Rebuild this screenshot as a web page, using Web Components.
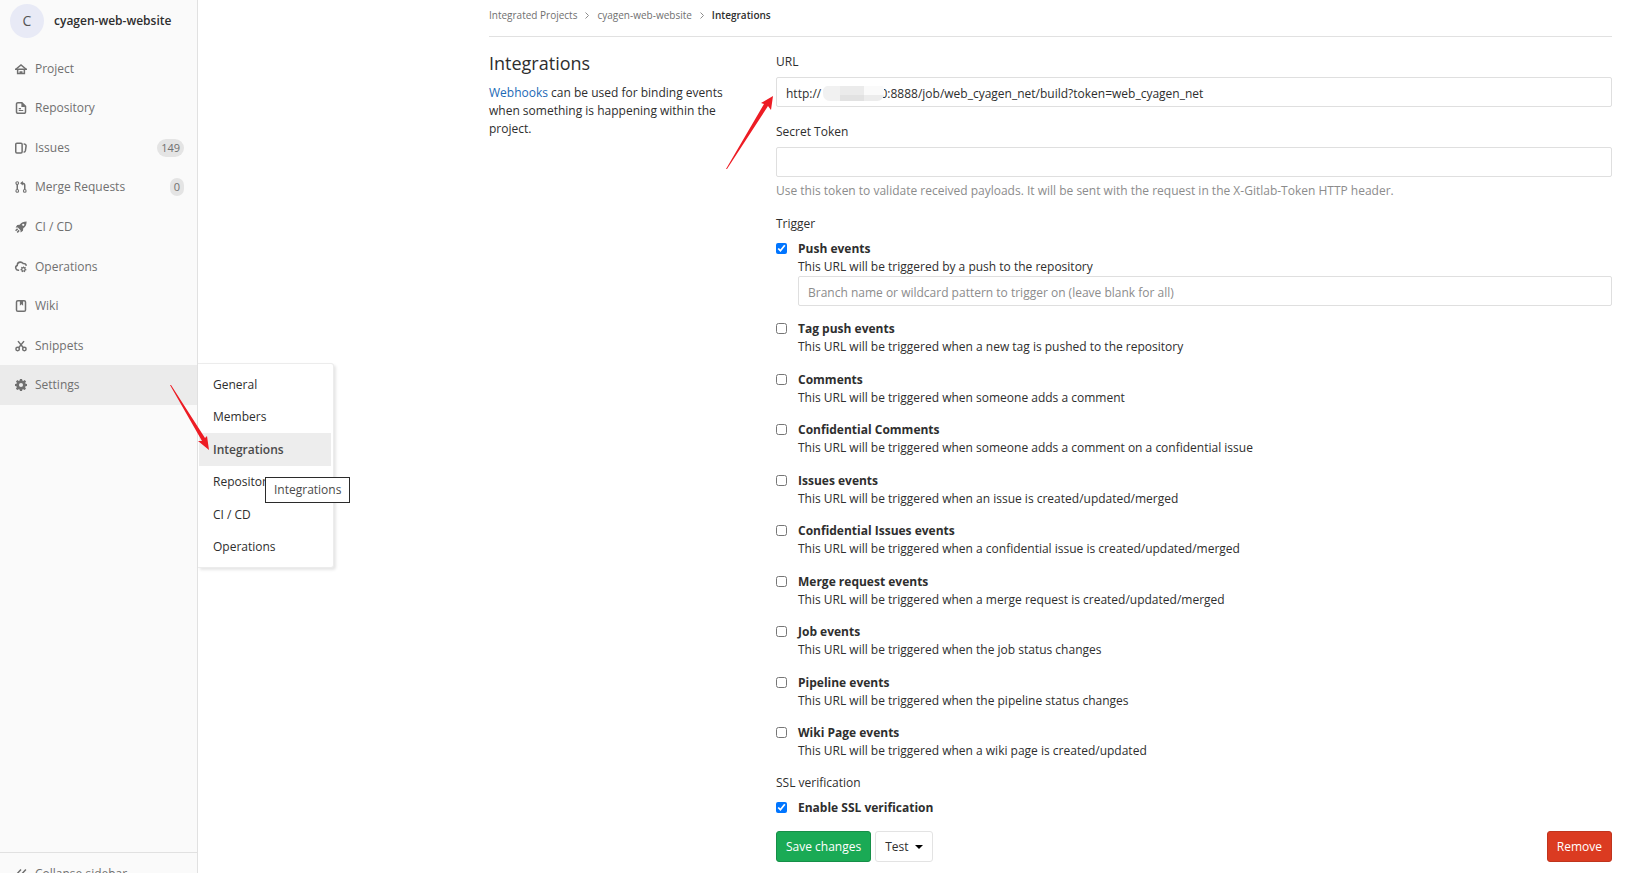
<!DOCTYPE html>
<html lang="en">
<head>
<meta charset="utf-8">
<title>Integrations · cyagen-web-website</title>
<style>
  body {
    margin: 0;
    overflow: hidden;
    font: 12px/18px "Open Sans", "Noto Sans", sans-serif;
    color: #2e2e2e;
    background: #fff;
  }
</style>
</head>
<body>
<app-shell>
  <project-sidebar slot="sidebar" name="cyagen-web-website" initial="C">
    <nav-item icon="home">Project</nav-item>
    <nav-item icon="doc">Repository</nav-item>
    <nav-item icon="issues" count="149">Issues</nav-item>
    <nav-item icon="merge" count="0">Merge Requests</nav-item>
    <nav-item icon="rocket">CI / CD</nav-item>
    <nav-item icon="cloud">Operations</nav-item>
    <nav-item icon="book">Wiki</nav-item>
    <nav-item icon="scissors">Snippets</nav-item>
    <nav-item icon="gear" active>Settings
      <nav-flyout slot="flyout" items="General,Members,Integrations,Repository,CI / CD,Operations" current="Integrations"></nav-flyout>
    </nav-item>
  </project-sidebar>

  <bread-crumbs path="Integrated Projects,cyagen-web-website,Integrations"></bread-crumbs>

  <settings-section heading="Integrations">
    <webhook-intro slot="intro"></webhook-intro>
    <form-field label="URL" value="http://                   0:8888/job/web_cyagen_net/build?token=web_cyagen_net" masked></form-field>
    <form-field label="Secret Token" hint="Use this token to validate received payloads. It will be sent with the request in the X-Gitlab-Token HTTP header."></form-field>
    <option-group label="Trigger" grow>
      <check-option label="Push events" hint="This URL will be triggered by a push to the repository" placeholder="Branch name or wildcard pattern to trigger on (leave blank for all)" checked></check-option>
      <check-option label="Tag push events" hint="This URL will be triggered when a new tag is pushed to the repository"></check-option>
      <check-option label="Comments" hint="This URL will be triggered when someone adds a comment"></check-option>
      <check-option label="Confidential Comments" hint="This URL will be triggered when someone adds a comment on a confidential issue"></check-option>
      <check-option label="Issues events" hint="This URL will be triggered when an issue is created/updated/merged"></check-option>
      <check-option label="Confidential Issues events" hint="This URL will be triggered when a confidential issue is created/updated/merged"></check-option>
      <check-option label="Merge request events" hint="This URL will be triggered when a merge request is created/updated/merged"></check-option>
      <check-option label="Job events" hint="This URL will be triggered when the job status changes"></check-option>
      <check-option label="Pipeline events" hint="This URL will be triggered when the pipeline status changes"></check-option>
      <check-option label="Wiki Page events" hint="This URL will be triggered when a wiki page is created/updated"></check-option>
    </option-group>
    <option-group label="SSL verification">
      <check-option label="Enable SSL verification" checked></check-option>
    </option-group>
    <form-actions></form-actions>
  </settings-section>
</app-shell>
<arrow-notes></arrow-notes>

<script>
/** Sidebar icons, all on a 16 x 16 grid. */
const ICONS = {
  home: '<path d="M1.500 8 8 2.500 14.500 8" class="s"/><path d="M0 8.300h16M3.500 8.300v5.700h9v-5.700" class="s"/><path d="M6 11h4v2.500H6z"/>',
  doc: '<path d="M3.800 1h5.400L14 5.600v7.600a1.800 1.800 0 0 1-1.800 1.800H3.800A1.800 1.800 0 0 1 2 13.200V2.800A1.800 1.800 0 0 1 3.800 1z" class="s"/><path d="M8.500 1v5.500H14L9.500 1z"/><path d="M5 8h3v1.500H5zM5 10.500h6V12H5z"/>',
  issues: '<rect x="1" y="1.500" width="8.500" height="13" rx="1.500" class="s"/><path d="M11.500 2.500c2.500.3 3.500.9 3.300 2.600l-.9 6.400c-.2 1.200-.9 1.900-2.400 2.200" class="s"/>',
  merge: '<circle cx="3" cy="2.800" r="1.800" class="t"/><circle cx="3" cy="13.200" r="1.800" class="t"/><circle cx="13" cy="13.200" r="1.800" class="t"/><path d="M3 4.600v6.800M13 11.400V6c0-2-.8-3-3-3H8.500" class="s"/><path d="M10.500 0v6L6.800 3z"/>',
  rocket: '<path d="M15.500.5c-4 0-7 1.200-9.300 4.500L3 5.400.8 8.500l3 .2 3.500 3.500.2 3 3.100-2.200.4-3.200C14.300 7.500 15.500 4.500 15.500.5zM11 3.600a1.500 1.500 0 1 1 0 3 1.500 1.500 0 0 1 0-3z" fill-rule="evenodd"/><path d="M3.500 10.500.8 13M5.500 12.500 3 15.200" class="s"/>',
  cloud: '<path d="M5.500 12.200H4.200A3.200 3.200 0 0 1 3 6C3 3.300 4.800 1.500 7.300 1.500c1.500 0 2.500.5 3.400 1.700 2.300-.2 4.100 1 4.300 3.300" class="s"/><path d="m11.500 6.800.6 1.400 1.500-.5.900 1.100-.8 1.300 1.500.9-.2 1.500-1.500.2.100 1.600-1.300.6-1.100-1.100-1.200 1.100-1.300-.7.200-1.500-1.500-.3-.1-1.500 1.400-.8-.7-1.400 1-1 1.500.5zm-.3 3a1.400 1.400 0 1 0 0 2.800 1.400 1.400 0 0 0 0-2.800z" fill-rule="evenodd"/>',
  book: '<rect x="2" y="1" width="12" height="14" rx="1.800" class="s"/><path d="M6.500 1h4.300v6.500L8.600 5.800 6.500 7.500z"/>',
  scissors: '<circle cx="3.500" cy="12" r="2.300" class="s"/><circle cx="12.500" cy="12" r="2.300" class="s"/><path d="M4 1.500 10.900 10M12 1.500 5.100 10" class="s"/>',
  gear: '<path d="M6.600 0h2.800l.4 2.100 1.300.5L12.900 1.400l1.900 1.900-1.200 1.800.5 1.300 1.900.3v2.700l-2 .4-.5 1.300 1.100 1.800-1.900 1.900-1.800-1.200-1.200.5L9.400 16H6.600l-.4-1.900-1.300-.5-1.800 1.200-1.900-1.900 1.200-1.800-.5-1.300L0 9.400V6.700l2-.4.5-1.300-1.200-1.800 1.900-1.900L5 2.600l1.200-.5zM8 5.300a2.700 2.700 0 1 0 0 5.400 2.700 2.700 0 0 0 0-5.400z" fill-rule="evenodd"/>',
  collapse: '<path d="M8 2 2.500 8 8 14M14.500 2 9 8l5.500 6" class="s"/>'
};

const iconSvg = (name) => `<svg viewBox="0 0 16 16" aria-hidden="true">${ICONS[name]}</svg>`;

const iconStyles = `
  svg { width: 12px; height: 12px; flex: none; fill: currentColor; overflow: visible; }
  svg .s { fill: none; stroke: currentColor; stroke-width: 2; }
  svg .t { fill: none; stroke: currentColor; stroke-width: 1.4; }
`;

const inputStyles = `
  input[type=text] {
    display: block;
    box-sizing: border-box;
    width: 100%;
    height: 30px;
    padding: 2px 9px 0;
    border: 1px solid #dfdfdf;
    border-radius: 2px;
    background: #fff;
    color: inherit;
    font: inherit;
  }
  input::placeholder { color: #8c8c8c; opacity: 1; }
`;

/** Base class: renders the subclass markup into an open shadow root. */
class BaseElement extends HTMLElement {
  connectedCallback () {
    if (this.shadowRoot) return;
    this.attachShadow({ mode: 'open' });
    this.shadowRoot.innerHTML = `<style>${this.styles()}</style>${this.markup()}`;
  }

  attr (name) {
    return this.getAttribute(name) || '';
  }
}

/** Sidebar on the left, breadcrumbs and content on the right. */
class AppShell extends BaseElement {
  styles () {
    return `
      :host { display: flex; min-height: 100vh; }
      main {
        flex: 1;
        display: flex;
        flex-direction: column;
        padding: 0 23px 11px 291px;
      }
    `;
  }

  markup () {
    return '<slot name="sidebar"></slot><main><slot></slot></main>';
  }
}

class ProjectSidebar extends BaseElement {
  styles () {
    return `
      ${iconStyles}
      :host {
        display: flex;
        flex-direction: column;
        box-sizing: border-box;
        flex: none;
        width: 198px;
        height: 100vh;
        background: #fafafa;
        border-right: 1px solid #e1e1e1;
      }
      header a {
        display: flex;
        align-items: center;
        gap: 10px;
        padding: 4px 10px;
        color: #2e2e2e;
        font-weight: 600;
        text-decoration: none;
      }
      .avatar {
        width: 34px;
        border-radius: 50%;
        background: #e8eaf6;
        color: #555;
        font-size: 14px;
        font-weight: 400;
        line-height: 34px;
        text-align: center;
      }
      nav {
        display: grid;
        grid-auto-rows: 1fr;
        height: 356px;
        margin-top: 7px;
      }
      button {
        display: flex;
        align-items: center;
        gap: 8px;
        height: 43px;
        margin: auto 0 -22px;
        padding: 0 15px;
        border: 0;
        border-top: 1px solid #e1e1e1;
        background: none;
        color: #707070;
        font: inherit;
      }
    `;
  }

  markup () {
    return `
      <header><a href="#"><span class="avatar">${this.attr('initial')}</span>${this.attr('name')}</a></header>
      <nav><slot></slot></nav>
      <button type="button">${iconSvg('collapse')}Collapse sidebar</button>
    `;
  }
}

class NavItem extends BaseElement {
  styles () {
    return `
      ${iconStyles}
      :host { display: grid; position: relative; color: #707070; }
      :host([active]) { background: #ebebeb; }
      a {
        display: flex;
        align-items: center;
        gap: 8px;
        padding: 0 13px 0 15px;
        color: inherit;
        text-decoration: none;
      }
      .label { flex: 1; }
      .badge {
        padding: 0 4px;
        border-radius: 9px;
        background: #e4e4e4;
        font-size: 11px;
      }
    `;
  }

  markup () {
    const badge = this.hasAttribute('count') ? `<span class="badge">${this.attr('count')}</span>` : '';
    return `
      <a href="#">${iconSvg(this.attr('icon'))}<span class="label"><slot></slot></span>${badge}</a>
      <slot name="flyout"></slot>
    `;
  }
}

/** Submenu that opens beside its nav item, with the tooltip of the hovered entry. */
class NavFlyout extends BaseElement {
  styles () {
    return `
      :host {
        position: absolute;
        left: 198px;
        top: -2px;
        box-sizing: border-box;
        width: 136px;
        padding: 4px 2px 4px 1px;
        border: 1px solid #ececec;
        border-left: 0;
        border-radius: 0 3px 3px 0;
        background: #fff;
        box-shadow: 2px 2px 3px #0000001a;
        color: #2e2e2e;
      }
      ul {
        display: grid;
        grid-auto-rows: 1fr;
        height: 195px;
        margin: 0;
        padding: 0;
        list-style: none;
      }
      li { display: grid; }
      a {
        display: flex;
        align-items: center;
        padding: 0 14px;
        color: inherit;
        text-decoration: none;
      }
      a[aria-current] { background: #ededed; color: #4a4a4a; font-weight: 600; }
      [role=tooltip] {
        position: absolute;
        left: 67px;
        top: 113px;
        padding: 3px 8px;
        border: 1px solid #2b2b2b;
        background: #fff;
        color: #4a4a4a;
      }
    `;
  }

  markup () {
    const current = this.attr('current');
    const items = this.attr('items').split(',').map((item) =>
      `<li><a href="#"${item === current ? ' aria-current="page"' : ''}>${item}</a></li>`);
    return `<ul>${items.join('')}</ul><div role="tooltip">${current}</div>`;
  }
}

class BreadCrumbs extends BaseElement {
  styles () {
    return `
      :host { display: block; border-bottom: 1px solid #e1e1e1; font-size: 10px; }
      nav { display: flex; align-items: center; gap: 8px; height: 30px; padding-bottom: 6px; }
      a { color: #707070; text-decoration: none; }
      a[aria-current] { color: #2e2e2e; font-weight: 600; }
      svg { width: 4px; height: 7px; fill: none; stroke: #8c8c8c; }
    `;
  }

  markup () {
    const path = this.attr('path').split(',');
    const links = path.map((item, i) =>
      `<a href="#"${i === path.length - 1 ? ' aria-current="page"' : ''}>${item}</a>`);
    return `<nav>${links.join('<svg viewBox="0 0 4 7" aria-hidden="true"><path d="m.5.5 3 3-3 3"/></svg>')}</nav>`;
  }
}

/** Two columns: heading with intro, and the form. */
class SettingsSection extends BaseElement {
  styles () {
    return `
      :host { flex: 1; display: grid; grid-template-columns: 287px 1fr; margin: 0 -14px; }
      section { padding: 15px 14px 0; }
      form { display: flex; flex-direction: column; gap: 14px; padding: 16px 14px 0; }
      h4 { margin: 0 0 10px; font-size: 18px; font-weight: 500; line-height: 22px; }
    `;
  }

  markup () {
    return `
      <section><h4>${this.attr('heading')}</h4><slot name="intro"></slot></section>
      <form><slot></slot></form>
    `;
  }
}

class WebhookIntro extends BaseElement {
  styles () {
    return `
      :host { display: block; }
      p { margin: 0; }
      a { color: #1b69b6; text-decoration: none; }
    `;
  }

  markup () {
    return '<p><a href="#">Webhooks</a> can be used for binding events when something is happening within the project.</p>';
  }
}

class FormField extends BaseElement {
  styles () {
    return `
      ${inputStyles}
      :host { display: block; margin-bottom: 2px; }
      label { display: block; margin-bottom: 6px; font-weight: 500; }
      .control { position: relative; }
      .mask {
        position: absolute;
        left: 47px;
        top: 9px;
        width: 61px;
        height: 15px;
        border-radius: 5px 3px 7px 7px;
        background:
          linear-gradient(90deg, #f1f1f1 17px, #ebebeb 17px 41px, #fafafa 41px) top / 100% 9px no-repeat,
          linear-gradient(90deg, #f1f1f1 17px, #e2e2e2 17px 41px, #ececec 41px);
      }
      p { margin: 5px 0 -1px; color: #8c8c8c; }
    `;
  }

  markup () {
    const mask = this.hasAttribute('masked') ? '<span class="mask"></span>' : '';
    const hint = this.hasAttribute('hint') ? `<p>${this.attr('hint')}</p>` : '';
    return `
      <label for="field">${this.attr('label')}</label>
      <div class="control"><input type="text" id="field" value="${this.attr('value')}">${mask}</div>
      ${hint}
    `;
  }
}

/** Titled list of options; with "grow" it spreads them over the free height. */
class OptionGroup extends BaseElement {
  styles () {
    return `
      :host { display: flex; flex-direction: column; gap: 7px; }
      :host([grow]) { flex: 1; }
      .list { flex: 1; display: flex; flex-direction: column; justify-content: space-between; }
    `;
  }

  markup () {
    const label = this.attr('label');
    return `<div>${label}</div><div class="list" role="group" aria-label="${label}"><slot></slot></div>`;
  }
}

class CheckOption extends BaseElement {
  styles () {
    return `
      ${inputStyles}
      :host { display: flex; gap: 11px; }
      input[type=checkbox] { flex: none; width: 11px; height: 11px; margin: 3px 0 0; }
      .body { flex: 1; }
      label { display: block; font-weight: 700; }
      p { margin: 0; }
    `;
  }

  markup () {
    const hint = this.hasAttribute('hint') ? `<p>${this.attr('hint')}</p>` : '';
    const placeholder = this.attr('placeholder');
    const extra = placeholder ? `<input type="text" placeholder="${placeholder}" aria-label="Branch filter">` : '';
    return `
      <input type="checkbox" id="check"${this.hasAttribute('checked') ? ' checked' : ''}>
      <div class="body"><label for="check">${this.attr('label')}</label>${hint}${extra}</div>
    `;
  }
}

class FormActions extends BaseElement {
  styles () {
    return `
      :host { display: flex; gap: 4px; }
      button {
        display: flex;
        align-items: center;
        gap: 6px;
        height: 31px;
        padding: 0 9px;
        border: 1px solid #e3e3e3;
        border-radius: 3px;
        background: #fff;
        color: #2e2e2e;
        font: inherit;
      }
      .save { border-color: #168f48; background: #1aaa55; color: #fff; }
      .remove { margin-left: auto; border-color: #c0341d; background: #db3b21; color: #fff; }
      svg { width: 8px; height: 4px; }
    `;
  }

  markup () {
    return `
      <button type="submit" class="save">Save changes</button>
      <button type="button">Test<svg viewBox="0 0 8 4" aria-hidden="true"><path d="M0 0h8L4 4z"/></svg></button>
      <button type="button" class="remove">Remove</button>
    `;
  }
}

/** Red pointer arrows drawn over the page. */
class ArrowNotes extends BaseElement {
  styles () {
    return `
      :host { position: absolute; left: 0; top: 0; pointer-events: none; }
      svg { display: block; width: 800px; height: 500px; fill: #ed1c24; }
    `;
  }

  markup () {
    return `
      <svg viewBox="0 0 800 500" aria-hidden="true">
        <path d="M773 96 771 110 768 106 727 169 726 169 764 104 761 103z"/>
        <path d="M209 450 198 441 202 441 170 385 171 385 205 438 207 436z"/>
      </svg>
    `;
  }
}

customElements.define('app-shell', AppShell);
customElements.define('project-sidebar', ProjectSidebar);
customElements.define('nav-item', NavItem);
customElements.define('nav-flyout', NavFlyout);
customElements.define('bread-crumbs', BreadCrumbs);
customElements.define('settings-section', SettingsSection);
customElements.define('webhook-intro', WebhookIntro);
customElements.define('form-field', FormField);
customElements.define('option-group', OptionGroup);
customElements.define('check-option', CheckOption);
customElements.define('form-actions', FormActions);
customElements.define('arrow-notes', ArrowNotes);
</script>
</body>
</html>
